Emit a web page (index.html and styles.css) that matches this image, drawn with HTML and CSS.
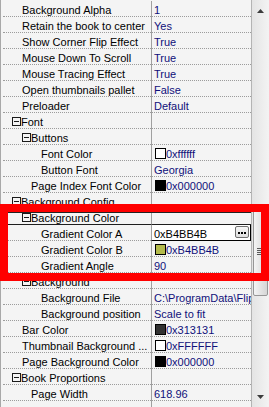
FILE: index.html
```html
<!DOCTYPE html>
<html>
<head>
<meta charset="utf-8">
<link rel="stylesheet" href="styles.css">
</head>
<body>
<div class="grid">
  <div class="rows">
    <div class="row"><div class="name l1">Background Alpha</div><div class="val">1</div></div>
    <div class="row"><div class="name l1">Retain the book to center</div><div class="val">Yes</div></div>
    <div class="row"><div class="name l1">Show Corner Flip Effect</div><div class="val">True</div></div>
    <div class="row"><div class="name l1">Mouse Down To Scroll</div><div class="val">True</div></div>
    <div class="row"><div class="name l1">Mouse Tracing Effect</div><div class="val">True</div></div>
    <div class="row"><div class="name l1">Open thumbnails pallet</div><div class="val">False</div></div>
    <div class="row"><div class="name l1">Preloader</div><div class="val">Default</div></div>
    <div class="row"><div class="name c1"><span class="exp"></span>Font</div><div class="val"></div></div>
    <div class="row"><div class="name c2"><span class="exp"></span>Buttons</div><div class="val"></div></div>
    <div class="row"><div class="name l3">Font Color</div><div class="val"><span class="sw sw-white"></span>0xffffff</div></div>
    <div class="row"><div class="name l3">Button Font</div><div class="val">Georgia</div></div>
    <div class="row"><div class="name l2">Page Index Font Color</div><div class="val"><span class="sw sw-black"></span>0x000000</div></div>
    <div class="row"><div class="name c1"><span class="exp"></span>Background Config</div><div class="val"></div></div>
    <div class="row dark"><div class="name c2"><span class="exp"></span>Background Color</div><div class="val"></div></div>
    <div class="row"><div class="name l3">Gradient Color A</div><div class="val edit"><span class="txt">0xB4BB4B</span><span class="dots"></span></div></div>
    <div class="row"><div class="name l3">Gradient Color B</div><div class="val"><span class="sw sw-olive"></span>0xB4BB4B</div></div>
    <div class="row"><div class="name l3">Gradient Angle</div><div class="val">90</div></div>
    <div class="row"><div class="name c2"><span class="exp"></span>Background</div><div class="val"></div></div>
    <div class="row"><div class="name l3">Background File</div><div class="val">C:\ProgramData\FlipBuilder\</div></div>
    <div class="row"><div class="name l3">Background position</div><div class="val">Scale to fit</div></div>
    <div class="row"><div class="name l1">Bar Color</div><div class="val"><span class="sw sw-gray"></span>0x313131</div></div>
    <div class="row"><div class="name l1">Thumbnail Background ...</div><div class="val"><span class="sw sw-white"></span>0xFFFFFF</div></div>
    <div class="row"><div class="name l1">Page Background Color</div><div class="val"><span class="sw sw-black"></span>0x000000</div></div>
    <div class="row"><div class="name c1"><span class="exp"></span>Book Proportions</div><div class="val"></div></div>
    <div class="row"><div class="name l2">Page Width</div><div class="val">618.96</div></div>
    <div class="row"><div class="name l2"></div><div class="val"></div></div>
  </div>
  <div class="sb">
    <div class="sb-btn"><svg width="7" height="4" viewBox="0 0 7 4"><path d="M0 4 L3.5 0 L7 4 Z" fill="#3c3c3c"/></svg></div>
    <div class="sb-track"><div class="thumb"><span class="grip"></span></div></div>
    <div class="sb-btn"><svg width="7" height="4" viewBox="0 0 7 4"><path d="M0 0 L3.5 4 L7 0 Z" fill="#3c3c3c"/></svg></div>
  </div>
</div>
<div class="mark"></div>
</body>
</html>
```
FILE: styles.css
```css
html, body {
  margin: 0;
  padding: 0;
}
body {
  width: 269px;
  height: 407px;
  overflow: hidden;
  background: #f0f0f0;
  font-family: "Liberation Sans", Arial, sans-serif;
  font-size: 11px;
  position: relative;
}
.grid {
  display: flex;
  height: 407px;
}
.rows {
  flex: none;
  width: 248px;
  border-left: 1px solid #a8a8a8;
  padding-left: 2px;
  padding-top: 1px;
  background: #f4f4f4;
  overflow: hidden;
}
.row {
  display: flex;
  height: 16px;
}
.name, .val {
  box-sizing: border-box;
  height: 16px;
  border-bottom: 1px dotted #9c9c9c;
  padding-top: 3px;
  line-height: 13px;
  white-space: nowrap;
  overflow-x: clip;
}
.name {
  width: 148px;
  color: #000;
}
.val {
  width: 100px;
  border-left: 1px solid #a0a0a0;
  padding-left: 2px;
  color: #10107a;
}
.l1 { padding-left: 19px; }
.l2 { padding-left: 28px; }
.l3 { padding-left: 38px; }
.c1 { padding-left: 9px; }
.c2 { padding-left: 19px; }
.exp {
  display: inline-block;
  box-sizing: border-box;
  width: 9px;
  height: 9px;
  border: 1px solid #1a1a1a;
  background: linear-gradient(#1a1a1a, #1a1a1a) center / 5px 1px no-repeat;
  vertical-align: 0;
}
.sw {
  display: inline-block;
  box-sizing: border-box;
  width: 11px;
  height: 11px;
  border: 1px solid #000;
  margin-left: 1px;
  vertical-align: -1px;
}
.sw-white { background: #fff; }
.sw-black { background: #000; }
.sw-olive { background: #b4bb4b; }
.sw-gray { background: #313131; }
.row.dark .name, .row.dark .val {
  border-bottom: 1px solid #1e1e1e;
}
.val.edit {
  display: flex;
  align-items: flex-start;
  padding-top: 0;
  background: #fff;
  color: #000;
  border-right: 1px solid #000;
  border-bottom: 1px solid #000;
}
.edit .txt {
  flex: 1;
  padding-top: 3px;
}
.dots {
  position: relative;
  box-sizing: border-box;
  width: 14px;
  height: 12px;
  margin: 1px 1px 0 0;
  border: 1px solid #6f6f6f;
  border-radius: 2px;
  background: linear-gradient(#f6f6f6, #dedede);
}
.dots::before {
  content: "";
  position: absolute;
  left: 2px;
  top: 5px;
  width: 2px;
  height: 2px;
  background: #000;
  box-shadow: 3px 0 #000, 6px 0 #000;
}
.sb {
  flex: none;
  width: 17px;
  border-left: 1px solid #b4b4b4;
  display: flex;
  flex-direction: column;
  background: linear-gradient(to right, #e4e4e4, #f3f3f3);
}
.sb-btn {
  height: 21px;
  display: flex;
  align-items: center;
  justify-content: center;
  flex: none;
}
.sb-btn svg { display: block; }
.sb-track {
  flex: 1;
}
.thumb {
  box-sizing: border-box;
  margin: 185px 1px 0 1px;
  height: 90px;
  border: 1px solid #969696;
  border-radius: 2px;
  background: linear-gradient(to right, #f4f4f4, #e4e4e4 50%, #d6d6d6);
  display: flex;
  align-items: center;
  justify-content: center;
}
.grip {
  display: block;
  width: 7px;
  height: 7px;
  background: repeating-linear-gradient(#5a5a5a 0 1px, transparent 1px 2px);
}
.mark {
  position: absolute;
  left: 0;
  top: 204px;
  width: 269px;
  height: 77px;
  box-sizing: border-box;
  border: 8px solid #f00;
}
.mark::before {
  content: "";
  position: absolute;
  left: 0;
  right: 10px;
  top: 0;
  height: 1px;
  background: #222;
}
```
